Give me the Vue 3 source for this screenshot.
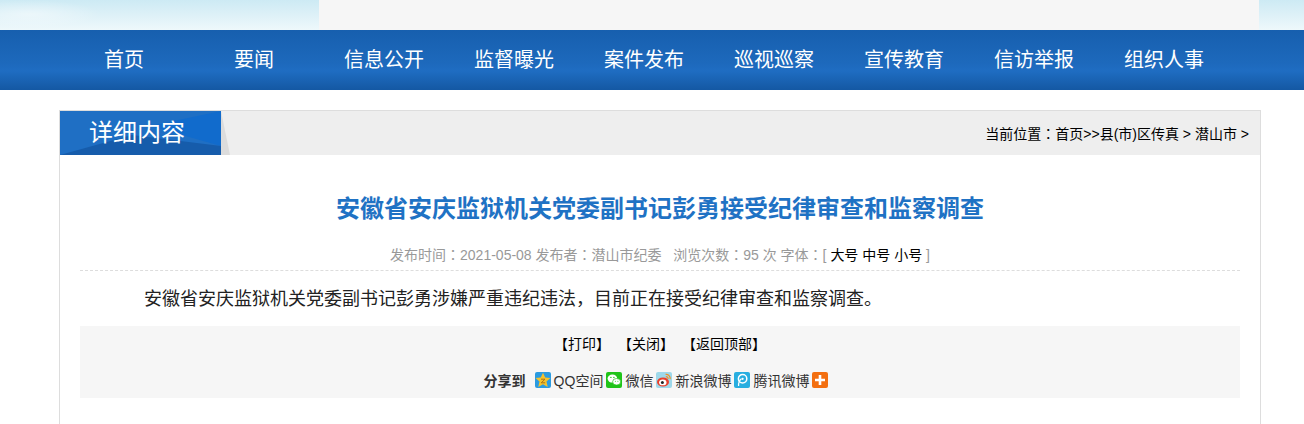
<script setup>
const navItems = ["首页", "要闻", "信息公开", "监督曝光", "案件发布", "巡视巡察", "宣传教育", "信访举报", "组织人事"];
const actions = ["【打印】", "【关闭】", "【返回顶部】"];
</script>

<template>
  <div class="page">
    <div class="banner">
      <div class="banner-inner"></div>
    </div>

    <nav class="nav">
      <ul class="nav-list">
        <li v-for="item in navItems" :key="item">{{ item }}</li>
      </ul>
    </nav>

    <section class="panel">
      <header class="panel-head">
        <div class="tab">
          <svg class="tab-bg" width="170" height="44" viewBox="0 0 170 44" aria-hidden="true">
            <rect width="161" height="44" fill="#1f6fc4" />
            <polygon points="90,15 161,0 161,35" fill="#116bcc" />
            <polygon points="0,44 72,24 161,35 161,44" fill="#165cab" />
            <polygon points="161,0 170,44 161,44" fill="#dcdcdc" />
          </svg>
          <span class="tab-text">详细内容</span>
        </div>
        <div class="crumb">当前位置<span class="punct">：</span>首页&gt;&gt;县(市)区传真 &gt; 潜山市 &gt;</div>
      </header>

      <div class="content">
        <h1 class="title">安徽省安庆监狱机关党委副书记彭勇接受纪律审查和监察调查</h1>
        <p class="meta">
          发布时间<span class="punct">：</span>2021-05-08 发布者<span class="punct">：</span>潜山市纪委 &nbsp; 浏览次数<span class="punct">：</span>95 次 字体<span class="punct">：</span>[
          <a>大号</a> <a>中号</a> <a>小号</a> ]
        </p>
        <p class="body-text">安徽省安庆监狱机关党委副书记彭勇涉嫌严重违纪违法<span class="punct">，</span>目前正在接受纪律审查和监察调查。</p>

        <div class="tools">
          <div class="actions">
            <a v-for="a in actions" :key="a">{{ a }}</a>
          </div>
          <div class="share">
            <b class="share-label">分享到</b>

            <span class="share-item">
              <svg width="16" height="16" viewBox="0 0 16 16" aria-hidden="true">
                <rect width="16" height="16" rx="2" fill="#2b9be0" />
                <polygon points="8,0.8 10.2,5.6 15.4,6.1 11.5,9.6 12.7,15 8,12.2 3.3,15 4.5,9.6 0.6,6.1 5.8,5.6" fill="#f6c32c" />
                <path d="M6 7.2h4L6.2 10.8h4" fill="none" stroke="#a8741a" stroke-width="1" />
              </svg>
              <span>QQ空间</span>
            </span>

            <span class="share-item">
              <svg width="16" height="16" viewBox="0 0 16 16" aria-hidden="true">
                <rect width="16" height="16" rx="2" fill="#1fc419" />
                <ellipse cx="6.4" cy="6.6" rx="4.8" ry="4" fill="#fff" />
                <ellipse cx="10.6" cy="9.8" rx="4" ry="3.3" fill="#fff" stroke="#1fc419" stroke-width=".7" />
                <circle cx="4.9" cy="5.4" r=".7" fill="#1fc419" />
                <circle cx="7.9" cy="5.4" r=".7" fill="#1fc419" />
                <circle cx="9.4" cy="9.2" r=".5" fill="#1fc419" />
                <circle cx="11.9" cy="9.2" r=".5" fill="#1fc419" />
              </svg>
              <span>微信</span>
            </span>

            <span class="share-item">
              <svg width="16" height="16" viewBox="0 0 16 16" aria-hidden="true">
                <rect width="16" height="16" rx="2" fill="#9ed8ea" />
                <ellipse cx="7" cy="10" rx="6" ry="4.6" fill="#e8402c" />
                <ellipse cx="6.8" cy="10.4" rx="3.7" ry="2.9" fill="#fff" />
                <circle cx="6.4" cy="10.6" r="1.5" fill="#222" />
                <path d="M9.6 2.4a4.2 4.2 0 0 1 4.6 4.8M9.8 4.6a2 2 0 0 1 2.2 2.4" fill="none" stroke="#f0902a" stroke-width="1.2" />
              </svg>
              <span>新浪微博</span>
            </span>

            <span class="share-item">
              <svg width="16" height="16" viewBox="0 0 16 16" aria-hidden="true">
                <rect width="16" height="16" rx="2" fill="#28aee0" />
                <circle cx="8.6" cy="6.8" r="4.2" fill="none" stroke="#fff" stroke-width="1.5" />
                <path d="M4.6 14C4.4 10.5 5.2 8.4 7.4 6.8" fill="none" stroke="#fff" stroke-width="1.2" />
                <circle cx="8.6" cy="6.8" r="1.1" fill="#fff" />
              </svg>
              <span>腾讯微博</span>
            </span>

            <svg class="more" width="16" height="16" viewBox="0 0 16 16" aria-hidden="true">
              <rect width="16" height="16" rx="2" fill="#f36f10" />
              <path d="M8 3v10M3 8h10" stroke="#fff" stroke-width="2.6" />
            </svg>
          </div>
        </div>
      </div>
    </section>
  </div>
</template>

<style scoped>
.page {
  width: 1304px;
  height: 424px;
  overflow: hidden;
  background: #fff;
  font-family: "Liberation Sans", "Noto Sans CJK SC", sans-serif;
}

.banner {
  height: 30px;
  background:
    radial-gradient(ellipse 70px 14px at 30px 14px, rgba(255, 255, 255, 0.45), rgba(255, 255, 255, 0)),
    linear-gradient(180deg, #cdeaf4 0%, #eef8fb 100%);
}
.banner-inner {
  width: 940px;
  height: 30px;
  margin-left: 319px;
  background: #f6f6f6;
}

.nav {
  height: 60px;
  background: linear-gradient(180deg, #175fae 0%, #1d69bc 55%, #1f6dc2 68%, #1458a3 100%);
}
.nav-list {
  display: flex;
  margin: 0;
  padding: 0 0 0 59px;
  list-style: none;
}
.nav-list li {
  width: 130px;
  line-height: 61px;
  text-align: center;
  font-size: 20px;
  color: #fff;
}

.panel {
  width: 1200px;
  height: 330px;
  margin: 20px 0 0 59px;
  border: 1px solid #ddd;
  border-bottom: 0;
}

.panel-head {
  display: flex;
  justify-content: space-between;
  align-items: center;
  height: 44px;
  background: #eee;
}
.tab {
  position: relative;
  width: 170px;
  height: 44px;
}
.tab-bg {
  position: absolute;
  left: 0;
  top: 0;
}
.tab-text {
  position: relative;
  display: block;
  padding-left: 29px;
  font-size: 24px;
  line-height: 44px;
  color: #fff;
}
.crumb {
  padding-right: 11px;
  font-size: 14px;
  color: #000;
}

/* 原图的全角标点水平居中，SC 字形靠左 */
.punct {
  font-family: "Noto Sans CJK KR", sans-serif;
  line-height: 0;
}

.content {
  padding: 0 20px;
}
.title {
  margin: 0;
  padding-top: 36px;
  font-size: 24px;
  line-height: 36px;
  font-weight: bold;
  text-align: center;
  color: #1f72c4;
}
.meta {
  margin: 13px 0 0;
  height: 30px;
  line-height: 30px;
  border-bottom: 1px dashed #ddd;
  text-align: center;
  font-size: 14px;
  color: #999;
}
.meta a {
  color: #000;
}
.body-text {
  margin: 14px 0 0;
  padding-left: 64px;
  font-size: 18px;
  line-height: 28px;
  color: #222;
}

.tools {
  height: 72px;
  margin-top: 13px;
  background: #f6f6f6;
}
.actions {
  display: flex;
  justify-content: center;
  gap: 8px;
  padding-top: 6px;
  height: 30px;
  line-height: 24px;
  font-size: 14px;
  color: #000;
}
.share {
  display: flex;
  align-items: center;
  justify-content: center;
  height: 24px;
  margin-top: 6px;
  padding-right: 8px;
  font-size: 14px;
  color: #333;
}
.share-label {
  margin-right: 9px;
}
.share-item {
  display: inline-flex;
  align-items: center;
  gap: 3px;
  margin-right: 3px;
}
</style>

<style>
body {
  margin: 0;
  background: #fff;
}
</style>
